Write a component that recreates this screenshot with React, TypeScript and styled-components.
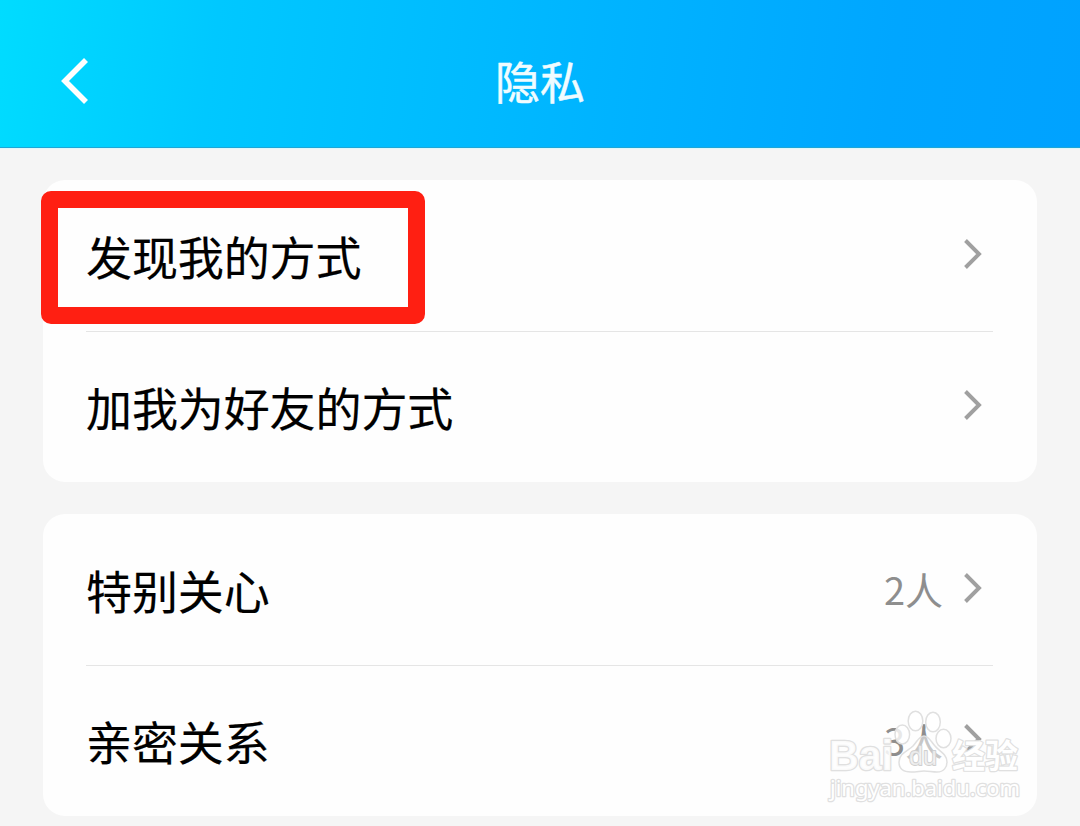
import React from "react";
import styled, { createGlobalStyle } from "styled-components";

const GlobalStyle = createGlobalStyle`
  * { box-sizing: border-box; }
  body {
    margin: 0;
    background: #f5f5f5;
    font-family: "Noto Sans CJK SC", sans-serif;
    overflow: hidden;
  }
`;

const Page = styled.main`
  position: relative;
  width: 1080px;
  height: 826px;
  overflow: hidden;
  background: #f5f5f5;
`;

const Header = styled.header`
  display: grid;
  grid-template-columns: 148px 1fr 148px;
  align-items: center;
  height: 148px;
  padding-top: 14px;
  background: linear-gradient(97deg, #00dcff 0%, #00c8ff 20%, #00b4ff 55%, #00a6ff 82%, #00a2ff 100%);
  border-bottom: 1px solid #1fa6d6;
  box-shadow: 0 1px 0 #dff8fb;
`;

const BackButton = styled.button`
  display: flex;
  width: 148px;
  padding: 0 0 0 57px;
  border: 0;
  background: none;
`;

const Title = styled.h1`
  margin: 0;
  color: #f0fcff;
  font-size: 45px;
  font-weight: 400;
  line-height: 60px;
  text-align: center;
  -webkit-text-stroke: 0.5px #f0fcff;
`;

const Content = styled.div`
  display: flex;
  flex-direction: column;
  gap: 32px;
  padding: 32px 43px 0;
`;

const Card = styled.section`
  border-radius: 22px;
  background: #fefefe;
`;

const Row = styled.div`
  display: flex;
  align-items: center;
  height: 151px;
  padding: 0 54px 0 43px;
`;

const Divider = styled.hr`
  height: 1px;
  margin: 0 44px -1px 43px;
  border: 0;
  background: #e5e5e5;
`;

const Label = styled.span`
  flex: 1;
  margin-bottom: 1px;
  color: #000;
  font-size: 46px;
  line-height: 60px;
  letter-spacing: -0.1px;
  -webkit-text-stroke: 0.2px #000;
`;

const Count = styled.span`
  margin: 0 20px 1px 0;
  color: #8e8e8e;
  font-size: 38px;
  line-height: 50px;
`;

const ChevronIcon = styled.svg`
  display: block;
  margin-bottom: 3px;
`;

const Highlight = styled.div`
  position: absolute;
  left: 41px;
  top: 191px;
  width: 384px;
  height: 133px;
  border: 17px solid #ff1f12;
  border-radius: 10px;
`;

const Watermark = styled.svg`
  position: absolute;
  left: 820px;
  top: 700px;

  text {
    paint-order: stroke;
    stroke-linejoin: round;
  }
`;

const Chevron = () => (
  <ChevronIcon width="20" height="32" viewBox="0 0 20 32" fill="none" stroke="#a0a0a0" strokeWidth="3.9">
    <path d="M2.5 2.5 16 16 2.5 29.5" />
  </ChevronIcon>
);

const groups: { label: string; count?: string }[][] = [
  [{ label: "发现我的方式" }, { label: "加我为好友的方式" }],
  [
    { label: "特别关心", count: "2人" },
    { label: "亲密关系", count: "3人" },
  ],
];

export default function App() {
  return (
    <Page>
      <GlobalStyle />
      <Header>
        <BackButton aria-label="返回">
          <svg width="32" height="50" viewBox="0 0 32 50" fill="none" stroke="#fff" strokeWidth="5.6">
            <path d="M29 4 8 25 29 46" />
          </svg>
        </BackButton>
        <Title>隐私</Title>
      </Header>
      <Content>
        {groups.map((rows, g) => (
          <Card key={g}>
            {rows.map((row, i) => (
              <React.Fragment key={row.label}>
                {i > 0 && <Divider />}
                <Row>
                  <Label>{row.label}</Label>
                  {row.count && <Count>{row.count}</Count>}
                  <Chevron />
                </Row>
              </React.Fragment>
            ))}
          </Card>
        ))}
      </Content>
      <Highlight />
      <Watermark width="220" height="115" viewBox="0 0 220 115" fill="#fff" stroke="#e0e0e0" strokeWidth="1.5">
        <text x="9" y="70" fontFamily="Liberation Sans" fontWeight="700" fontSize="42" textLength="64" lengthAdjust="spacingAndGlyphs" strokeWidth="2.6" fillOpacity="0.85">Bai</text>
        <g fillOpacity="0.8">
          <ellipse cx="82.300" cy="34.500" rx="7.300" ry="9.500" />
          <ellipse cx="95.500" cy="21" rx="7.300" ry="9.800" />
          <ellipse cx="113" cy="22" rx="7.300" ry="9.800" />
          <ellipse cx="123.500" cy="38.500" rx="7.500" ry="9.300" />
        </g>
        <path fillOpacity="0.5" d="M104 36C99 36 97 42 93 46C88 51 79 53 79 62C79 69 84 72 91 72C97 72 100 71 104 71C109 71 112 72 117 72C124 72 127 67 127 62C127 54 119 51 115 46C111 42 109 36 104 36Z" />
        <text x="89" y="65" fontFamily="Liberation Sans" fontSize="26" textLength="28" lengthAdjust="spacingAndGlyphs" fillOpacity="0.6" stroke="#d0d0d0" strokeWidth="1.8">du</text>
        <text x="132" y="68" fontFamily="Noto Sans CJK SC" fontWeight="700" fontSize="33" textLength="66" strokeWidth="2.4">经验</text>
        <text x="10" y="96" fontFamily="Noto Sans" fontSize="22.500" textLength="190" lengthAdjust="spacingAndGlyphs" strokeWidth="2.6">jingyan.baidu.com</text>
      </Watermark>
    </Page>
  );
}
